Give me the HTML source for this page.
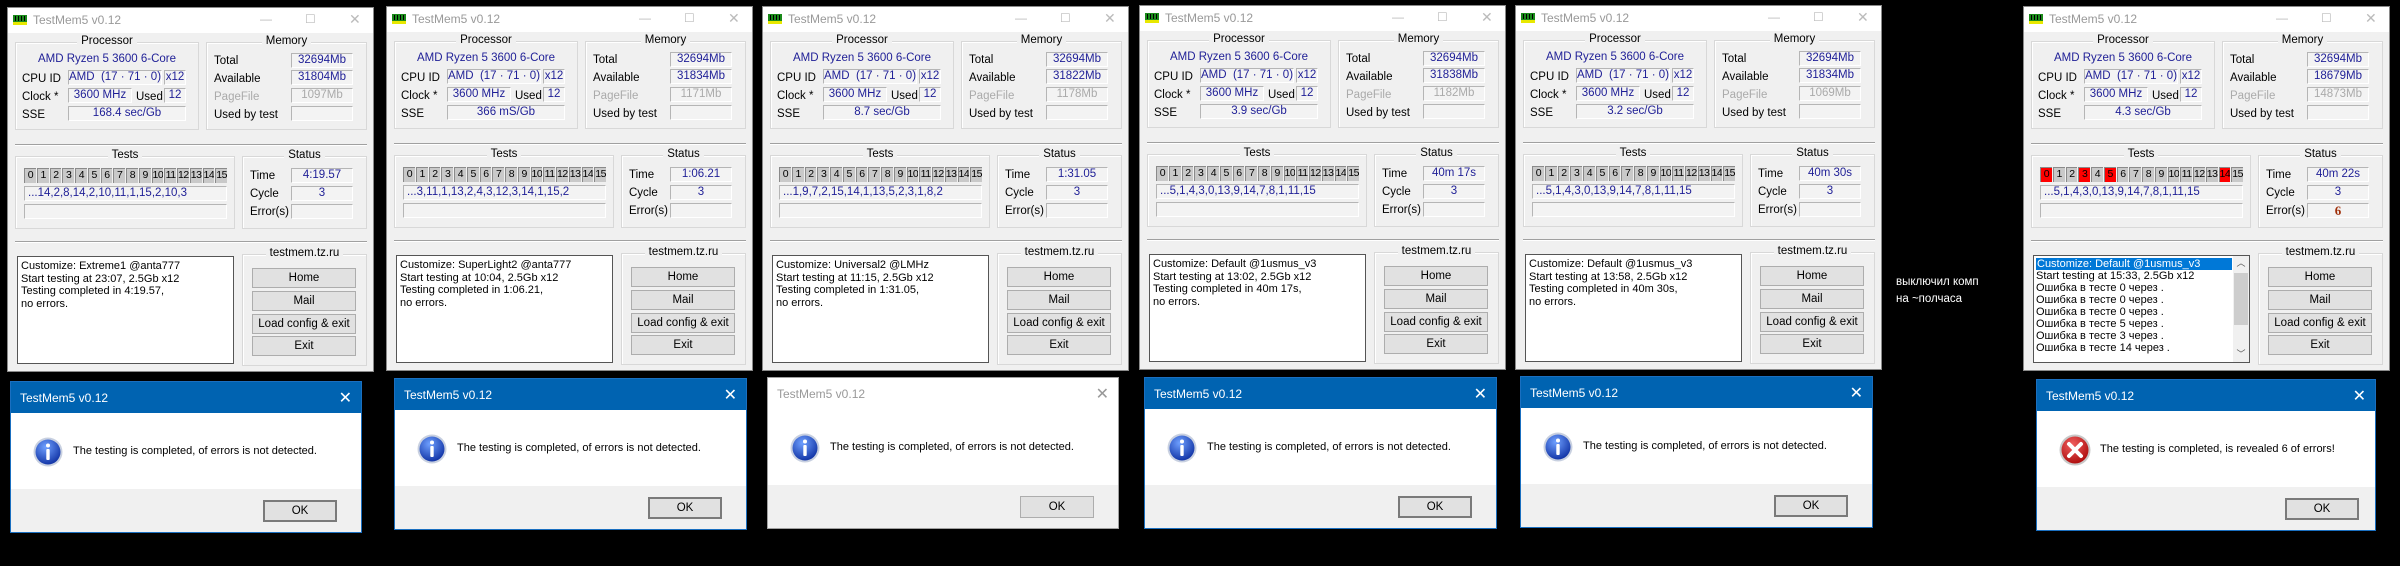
<!DOCTYPE html>
<html><head><meta charset="utf-8"><style>
*{box-sizing:border-box;margin:0;padding:0}
body{width:2400px;height:566px;background:#000;position:relative;overflow:hidden;font-family:"Liberation Sans","DejaVu Sans",sans-serif;font-size:11px;color:#000}
.w{position:absolute;width:367px;height:365px;background:#f0f0f0;border:1px solid #8a8a8a}
.tb{position:absolute;left:0;top:0;width:100%;height:25px;background:#fff}
.tt{position:absolute;left:25px;top:5px;font-size:12px;color:#999}
.ic{position:absolute;left:5px;top:7px}
.tbn{position:absolute;top:4px;color:#bbb;font-size:12px}
.g{position:absolute;border:1px solid #d8d8d8;box-shadow:inset 1px 1px 0 #fff}
.gl{position:absolute;top:-8px;left:0;right:0;text-align:center}
.gl span{background:#f0f0f0;padding:0 4px;font-size:11.5px}
.l{position:absolute;font-size:11.5px;line-height:14px}
.f{position:absolute;height:15px;background:#f3f3f3;border:1px solid;border-color:#b5b5b5 #fff #fff #b5b5b5;color:#1e1e96;text-align:center;line-height:13px;font-size:11.5px;white-space:nowrap;overflow:hidden}
.sep{position:absolute;left:7px;width:352px;height:2px;border-top:1px solid #a0a0a0;border-bottom:1px solid #fff}
.bx{position:absolute;left:16px;top:160px;width:203px;height:15px;display:flex;gap:1px}
.bx i{flex:1;font-style:normal;background:#c9c9c9;border-left:1px solid #8a8a8a;border-top:1px solid #8a8a8a;font-size:10.5px;line-height:13px;text-align:center;letter-spacing:-0.5px;overflow:hidden}
.bx i.r{background:#f00}
.log{position:absolute;left:9px;top:248px;width:217px;height:108px;background:#fff;border:1px solid #555;padding:3px 3px;font-size:11px;line-height:12.5px;white-space:nowrap;overflow:hidden}
.b{position:absolute;left:244px;width:104px;height:20px;background:#e1e1e1;border:1px solid #adadad;text-align:center;line-height:18px;font-size:11.5px}
.d{position:absolute;height:152px;background:#fff;border:1px solid #1a6fc0}
.dt{position:absolute;left:0;top:0;right:0;height:31px;background:#0063b1;color:#fff;font-size:12px;padding:9px 0 0 9px}
.dx{position:absolute;right:9px;top:6px;font-size:16px;color:#fff}
.dm{position:absolute;left:62px;top:63px;font-size:11px;white-space:nowrap;color:#000}
.dicon{position:absolute;left:22px;top:55px}
.df{position:absolute;left:0;right:0;bottom:0;height:43px;background:#f0f0f0}
.ok{position:absolute;right:24px;top:11px;width:74px;height:22px;border:2px solid #7a7a7a;background:#e1e1e1;text-align:center;line-height:18px;font-size:11.5px}
.in{border-color:#a0a0a0}
.in .dt{background:#fff;color:#999}
.in .dx{color:#999}
.in .ok{border-color:#adadad;border-width:1px;line-height:20px}
</style></head><body>

<svg width="0" height="0" style="position:absolute"><defs>
<g id="mi"><rect x="0" y="0" width="14" height="9" fill="#1a8a1a"/><rect x="2" y="1" width="1" height="5" fill="#000"/><rect x="5" y="1" width="1" height="5" fill="#000"/><rect x="8" y="1" width="1" height="5" fill="#000"/><rect x="11" y="1" width="1" height="5" fill="#000"/><rect x="0" y="7" width="14" height="3" fill="#e8e800"/></g>
<radialGradient id="bg1" cx="40%" cy="30%" r="70%"><stop offset="0" stop-color="#6fa0ff"/><stop offset="1" stop-color="#1437a8"/></radialGradient>
<g id="info"><circle cx="15" cy="15" r="14.5" fill="#c8d0e0"/><circle cx="15" cy="15" r="12.5" fill="url(#bg1)"/><circle cx="15" cy="8.5" r="2" fill="#fff"/><rect x="13.3" y="12" width="3.4" height="11" rx="1" fill="#fff"/></g>
<radialGradient id="rg1" cx="40%" cy="30%" r="70%"><stop offset="0" stop-color="#f06060"/><stop offset="1" stop-color="#b01010"/></radialGradient>
<g id="err"><circle cx="16" cy="16" r="15.5" fill="#c8c8c8"/><circle cx="16" cy="16" r="13.5" fill="url(#rg1)"/><path d="M10 10 L22 22 M22 10 L10 22" stroke="#fff" stroke-width="4" stroke-linecap="round"/></g>
</defs></svg>

<div class="w" style="left:7px;top:7px">
<div class="tb"><svg class="ic" width="14" height="10"><use href="#mi"/></svg><div class="tt">TestMem5 v0.12</div><div class="tbn" style="left:252px">—</div><div class="tbn" style="left:297px">☐</div><div class="tbn" style="left:341px;font-size:14px;top:3px">✕</div></div>
<div class="g" style="left:7px;top:34px;width:184px;height:88px"><div class="gl"><span>Processor</span></div></div>
<div class="l" style="left:7px;width:184px;text-align:center;top:44px;color:#1e1e96">AMD Ryzen 5 3600 6-Core</div>
<div class="l" style="left:14px;top:64px">CPU ID</div><div class="f" style="left:60px;top:62px;width:94px">AMD &nbsp;(17 · 71 · 0)</div><div class="f" style="left:156px;top:62px;width:22px">x12</div>
<div class="l" style="left:14px;top:82px">Clock *</div><div class="f" style="left:60px;top:80px;width:64px">3600 MHz</div><div class="l" style="left:128px;top:82px">Used</div><div class="f" style="left:156px;top:80px;width:22px">12</div>
<div class="l" style="left:14px;top:100px">SSE</div><div class="f" style="left:60px;top:98px;width:118px">168.4 sec/Gb</div>
<div class="g" style="left:198px;top:34px;width:161px;height:88px"><div class="gl"><span>Memory</span></div></div>
<div class="l" style="left:206px;top:46px">Total</div><div class="f" style="left:283px;top:45px;width:62px">32694Mb</div>
<div class="l" style="left:206px;top:64px">Available</div><div class="f" style="left:283px;top:62px;width:62px">31804Mb</div>
<div class="l" style="left:206px;top:82px;color:#aaa">PageFile</div><div class="f" style="left:283px;top:80px;width:62px;color:#aaa">1097Mb</div>
<div class="l" style="left:206px;top:100px">Used by test</div><div class="f" style="left:283px;top:98px;width:62px"></div>
<div class="sep" style="top:136px"></div>
<div class="g" style="left:7px;top:148px;width:220px;height:73px"><div class="gl"><span>Tests</span></div></div>
<div class="bx"><i>0</i><i>1</i><i>2</i><i>3</i><i>4</i><i>5</i><i>6</i><i>7</i><i>8</i><i>9</i><i>10</i><i>11</i><i>12</i><i>13</i><i>14</i><i>15</i></div>
<div class="f" style="left:16px;top:178px;width:203px;text-align:left;padding-left:3px">...14,2,8,14,2,10,11,1,15,2,10,3</div>
<div class="f" style="left:16px;top:196px;width:203px"></div>
<div class="g" style="left:234px;top:148px;width:125px;height:73px"><div class="gl"><span>Status</span></div></div>
<div class="l" style="left:242px;top:161px">Time</div><div class="f" style="left:283px;top:160px;width:62px">4:19.57</div>
<div class="l" style="left:242px;top:179px">Cycle</div><div class="f" style="left:283px;top:178px;width:62px">3</div>
<div class="l" style="left:242px;top:197px">Error(s)</div><div class="f" style="left:283px;top:196px;width:62px"></div>
<div class="sep" style="top:233px"></div>
<div class="log">Customize: Extreme1 @anta777<br>Start testing at 23:07, 2.5Gb x12<br>Testing completed in 4:19.57,<br>no errors.</div>
<div class="g" style="left:234px;top:246px;width:125px;height:112px"><div class="gl"><span>testmem.tz.ru</span></div></div>
<div class="b" style="top:260px">Home</div><div class="b" style="top:283px">Mail</div><div class="b" style="top:306px">Load config &amp; exit</div><div class="b" style="top:328px">Exit</div>
</div>

<div class="w" style="left:386px;top:6px">
<div class="tb"><svg class="ic" width="14" height="10"><use href="#mi"/></svg><div class="tt">TestMem5 v0.12</div><div class="tbn" style="left:252px">—</div><div class="tbn" style="left:297px">☐</div><div class="tbn" style="left:341px;font-size:14px;top:3px">✕</div></div>
<div class="g" style="left:7px;top:34px;width:184px;height:88px"><div class="gl"><span>Processor</span></div></div>
<div class="l" style="left:7px;width:184px;text-align:center;top:44px;color:#1e1e96">AMD Ryzen 5 3600 6-Core</div>
<div class="l" style="left:14px;top:64px">CPU ID</div><div class="f" style="left:60px;top:62px;width:94px">AMD &nbsp;(17 · 71 · 0)</div><div class="f" style="left:156px;top:62px;width:22px">x12</div>
<div class="l" style="left:14px;top:82px">Clock *</div><div class="f" style="left:60px;top:80px;width:64px">3600 MHz</div><div class="l" style="left:128px;top:82px">Used</div><div class="f" style="left:156px;top:80px;width:22px">12</div>
<div class="l" style="left:14px;top:100px">SSE</div><div class="f" style="left:60px;top:98px;width:118px">366 mS/Gb</div>
<div class="g" style="left:198px;top:34px;width:161px;height:88px"><div class="gl"><span>Memory</span></div></div>
<div class="l" style="left:206px;top:46px">Total</div><div class="f" style="left:283px;top:45px;width:62px">32694Mb</div>
<div class="l" style="left:206px;top:64px">Available</div><div class="f" style="left:283px;top:62px;width:62px">31834Mb</div>
<div class="l" style="left:206px;top:82px;color:#aaa">PageFile</div><div class="f" style="left:283px;top:80px;width:62px;color:#aaa">1171Mb</div>
<div class="l" style="left:206px;top:100px">Used by test</div><div class="f" style="left:283px;top:98px;width:62px"></div>
<div class="sep" style="top:136px"></div>
<div class="g" style="left:7px;top:148px;width:220px;height:73px"><div class="gl"><span>Tests</span></div></div>
<div class="bx"><i>0</i><i>1</i><i>2</i><i>3</i><i>4</i><i>5</i><i>6</i><i>7</i><i>8</i><i>9</i><i>10</i><i>11</i><i>12</i><i>13</i><i>14</i><i>15</i></div>
<div class="f" style="left:16px;top:178px;width:203px;text-align:left;padding-left:3px">...3,11,1,13,2,4,3,12,3,14,1,15,2</div>
<div class="f" style="left:16px;top:196px;width:203px"></div>
<div class="g" style="left:234px;top:148px;width:125px;height:73px"><div class="gl"><span>Status</span></div></div>
<div class="l" style="left:242px;top:161px">Time</div><div class="f" style="left:283px;top:160px;width:62px">1:06.21</div>
<div class="l" style="left:242px;top:179px">Cycle</div><div class="f" style="left:283px;top:178px;width:62px">3</div>
<div class="l" style="left:242px;top:197px">Error(s)</div><div class="f" style="left:283px;top:196px;width:62px"></div>
<div class="sep" style="top:233px"></div>
<div class="log">Customize: SuperLight2 @anta777<br>Start testing at 10:04, 2.5Gb x12<br>Testing completed in 1:06.21,<br>no errors.</div>
<div class="g" style="left:234px;top:246px;width:125px;height:112px"><div class="gl"><span>testmem.tz.ru</span></div></div>
<div class="b" style="top:260px">Home</div><div class="b" style="top:283px">Mail</div><div class="b" style="top:306px">Load config &amp; exit</div><div class="b" style="top:328px">Exit</div>
</div>

<div class="w" style="left:762px;top:6px">
<div class="tb"><svg class="ic" width="14" height="10"><use href="#mi"/></svg><div class="tt">TestMem5 v0.12</div><div class="tbn" style="left:252px">—</div><div class="tbn" style="left:297px">☐</div><div class="tbn" style="left:341px;font-size:14px;top:3px">✕</div></div>
<div class="g" style="left:7px;top:34px;width:184px;height:88px"><div class="gl"><span>Processor</span></div></div>
<div class="l" style="left:7px;width:184px;text-align:center;top:44px;color:#1e1e96">AMD Ryzen 5 3600 6-Core</div>
<div class="l" style="left:14px;top:64px">CPU ID</div><div class="f" style="left:60px;top:62px;width:94px">AMD &nbsp;(17 · 71 · 0)</div><div class="f" style="left:156px;top:62px;width:22px">x12</div>
<div class="l" style="left:14px;top:82px">Clock *</div><div class="f" style="left:60px;top:80px;width:64px">3600 MHz</div><div class="l" style="left:128px;top:82px">Used</div><div class="f" style="left:156px;top:80px;width:22px">12</div>
<div class="l" style="left:14px;top:100px">SSE</div><div class="f" style="left:60px;top:98px;width:118px">8.7 sec/Gb</div>
<div class="g" style="left:198px;top:34px;width:161px;height:88px"><div class="gl"><span>Memory</span></div></div>
<div class="l" style="left:206px;top:46px">Total</div><div class="f" style="left:283px;top:45px;width:62px">32694Mb</div>
<div class="l" style="left:206px;top:64px">Available</div><div class="f" style="left:283px;top:62px;width:62px">31822Mb</div>
<div class="l" style="left:206px;top:82px;color:#aaa">PageFile</div><div class="f" style="left:283px;top:80px;width:62px;color:#aaa">1178Mb</div>
<div class="l" style="left:206px;top:100px">Used by test</div><div class="f" style="left:283px;top:98px;width:62px"></div>
<div class="sep" style="top:136px"></div>
<div class="g" style="left:7px;top:148px;width:220px;height:73px"><div class="gl"><span>Tests</span></div></div>
<div class="bx"><i>0</i><i>1</i><i>2</i><i>3</i><i>4</i><i>5</i><i>6</i><i>7</i><i>8</i><i>9</i><i>10</i><i>11</i><i>12</i><i>13</i><i>14</i><i>15</i></div>
<div class="f" style="left:16px;top:178px;width:203px;text-align:left;padding-left:3px">...1,9,7,2,15,14,1,13,5,2,3,1,8,2</div>
<div class="f" style="left:16px;top:196px;width:203px"></div>
<div class="g" style="left:234px;top:148px;width:125px;height:73px"><div class="gl"><span>Status</span></div></div>
<div class="l" style="left:242px;top:161px">Time</div><div class="f" style="left:283px;top:160px;width:62px">1:31.05</div>
<div class="l" style="left:242px;top:179px">Cycle</div><div class="f" style="left:283px;top:178px;width:62px">3</div>
<div class="l" style="left:242px;top:197px">Error(s)</div><div class="f" style="left:283px;top:196px;width:62px"></div>
<div class="sep" style="top:233px"></div>
<div class="log">Customize: Universal2 @LMHz<br>Start testing at 11:15, 2.5Gb x12<br>Testing completed in 1:31.05,<br>no errors.</div>
<div class="g" style="left:234px;top:246px;width:125px;height:112px"><div class="gl"><span>testmem.tz.ru</span></div></div>
<div class="b" style="top:260px">Home</div><div class="b" style="top:283px">Mail</div><div class="b" style="top:306px">Load config &amp; exit</div><div class="b" style="top:328px">Exit</div>
</div>

<div class="w" style="left:1139px;top:5px">
<div class="tb"><svg class="ic" width="14" height="10"><use href="#mi"/></svg><div class="tt">TestMem5 v0.12</div><div class="tbn" style="left:252px">—</div><div class="tbn" style="left:297px">☐</div><div class="tbn" style="left:341px;font-size:14px;top:3px">✕</div></div>
<div class="g" style="left:7px;top:34px;width:184px;height:88px"><div class="gl"><span>Processor</span></div></div>
<div class="l" style="left:7px;width:184px;text-align:center;top:44px;color:#1e1e96">AMD Ryzen 5 3600 6-Core</div>
<div class="l" style="left:14px;top:64px">CPU ID</div><div class="f" style="left:60px;top:62px;width:94px">AMD &nbsp;(17 · 71 · 0)</div><div class="f" style="left:156px;top:62px;width:22px">x12</div>
<div class="l" style="left:14px;top:82px">Clock *</div><div class="f" style="left:60px;top:80px;width:64px">3600 MHz</div><div class="l" style="left:128px;top:82px">Used</div><div class="f" style="left:156px;top:80px;width:22px">12</div>
<div class="l" style="left:14px;top:100px">SSE</div><div class="f" style="left:60px;top:98px;width:118px">3.9 sec/Gb</div>
<div class="g" style="left:198px;top:34px;width:161px;height:88px"><div class="gl"><span>Memory</span></div></div>
<div class="l" style="left:206px;top:46px">Total</div><div class="f" style="left:283px;top:45px;width:62px">32694Mb</div>
<div class="l" style="left:206px;top:64px">Available</div><div class="f" style="left:283px;top:62px;width:62px">31838Mb</div>
<div class="l" style="left:206px;top:82px;color:#aaa">PageFile</div><div class="f" style="left:283px;top:80px;width:62px;color:#aaa">1182Mb</div>
<div class="l" style="left:206px;top:100px">Used by test</div><div class="f" style="left:283px;top:98px;width:62px"></div>
<div class="sep" style="top:136px"></div>
<div class="g" style="left:7px;top:148px;width:220px;height:73px"><div class="gl"><span>Tests</span></div></div>
<div class="bx"><i>0</i><i>1</i><i>2</i><i>3</i><i>4</i><i>5</i><i>6</i><i>7</i><i>8</i><i>9</i><i>10</i><i>11</i><i>12</i><i>13</i><i>14</i><i>15</i></div>
<div class="f" style="left:16px;top:178px;width:203px;text-align:left;padding-left:3px">...5,1,4,3,0,13,9,14,7,8,1,11,15</div>
<div class="f" style="left:16px;top:196px;width:203px"></div>
<div class="g" style="left:234px;top:148px;width:125px;height:73px"><div class="gl"><span>Status</span></div></div>
<div class="l" style="left:242px;top:161px">Time</div><div class="f" style="left:283px;top:160px;width:62px">40m 17s</div>
<div class="l" style="left:242px;top:179px">Cycle</div><div class="f" style="left:283px;top:178px;width:62px">3</div>
<div class="l" style="left:242px;top:197px">Error(s)</div><div class="f" style="left:283px;top:196px;width:62px"></div>
<div class="sep" style="top:233px"></div>
<div class="log">Customize: Default @1usmus_v3<br>Start testing at 13:02, 2.5Gb x12<br>Testing completed in 40m 17s,<br>no errors.</div>
<div class="g" style="left:234px;top:246px;width:125px;height:112px"><div class="gl"><span>testmem.tz.ru</span></div></div>
<div class="b" style="top:260px">Home</div><div class="b" style="top:283px">Mail</div><div class="b" style="top:306px">Load config &amp; exit</div><div class="b" style="top:328px">Exit</div>
</div>

<div class="w" style="left:1515px;top:5px">
<div class="tb"><svg class="ic" width="14" height="10"><use href="#mi"/></svg><div class="tt">TestMem5 v0.12</div><div class="tbn" style="left:252px">—</div><div class="tbn" style="left:297px">☐</div><div class="tbn" style="left:341px;font-size:14px;top:3px">✕</div></div>
<div class="g" style="left:7px;top:34px;width:184px;height:88px"><div class="gl"><span>Processor</span></div></div>
<div class="l" style="left:7px;width:184px;text-align:center;top:44px;color:#1e1e96">AMD Ryzen 5 3600 6-Core</div>
<div class="l" style="left:14px;top:64px">CPU ID</div><div class="f" style="left:60px;top:62px;width:94px">AMD &nbsp;(17 · 71 · 0)</div><div class="f" style="left:156px;top:62px;width:22px">x12</div>
<div class="l" style="left:14px;top:82px">Clock *</div><div class="f" style="left:60px;top:80px;width:64px">3600 MHz</div><div class="l" style="left:128px;top:82px">Used</div><div class="f" style="left:156px;top:80px;width:22px">12</div>
<div class="l" style="left:14px;top:100px">SSE</div><div class="f" style="left:60px;top:98px;width:118px">3.2 sec/Gb</div>
<div class="g" style="left:198px;top:34px;width:161px;height:88px"><div class="gl"><span>Memory</span></div></div>
<div class="l" style="left:206px;top:46px">Total</div><div class="f" style="left:283px;top:45px;width:62px">32694Mb</div>
<div class="l" style="left:206px;top:64px">Available</div><div class="f" style="left:283px;top:62px;width:62px">31834Mb</div>
<div class="l" style="left:206px;top:82px;color:#aaa">PageFile</div><div class="f" style="left:283px;top:80px;width:62px;color:#aaa">1069Mb</div>
<div class="l" style="left:206px;top:100px">Used by test</div><div class="f" style="left:283px;top:98px;width:62px"></div>
<div class="sep" style="top:136px"></div>
<div class="g" style="left:7px;top:148px;width:220px;height:73px"><div class="gl"><span>Tests</span></div></div>
<div class="bx"><i>0</i><i>1</i><i>2</i><i>3</i><i>4</i><i>5</i><i>6</i><i>7</i><i>8</i><i>9</i><i>10</i><i>11</i><i>12</i><i>13</i><i>14</i><i>15</i></div>
<div class="f" style="left:16px;top:178px;width:203px;text-align:left;padding-left:3px">...5,1,4,3,0,13,9,14,7,8,1,11,15</div>
<div class="f" style="left:16px;top:196px;width:203px"></div>
<div class="g" style="left:234px;top:148px;width:125px;height:73px"><div class="gl"><span>Status</span></div></div>
<div class="l" style="left:242px;top:161px">Time</div><div class="f" style="left:283px;top:160px;width:62px">40m 30s</div>
<div class="l" style="left:242px;top:179px">Cycle</div><div class="f" style="left:283px;top:178px;width:62px">3</div>
<div class="l" style="left:242px;top:197px">Error(s)</div><div class="f" style="left:283px;top:196px;width:62px"></div>
<div class="sep" style="top:233px"></div>
<div class="log">Customize: Default @1usmus_v3<br>Start testing at 13:58, 2.5Gb x12<br>Testing completed in 40m 30s,<br>no errors.</div>
<div class="g" style="left:234px;top:246px;width:125px;height:112px"><div class="gl"><span>testmem.tz.ru</span></div></div>
<div class="b" style="top:260px">Home</div><div class="b" style="top:283px">Mail</div><div class="b" style="top:306px">Load config &amp; exit</div><div class="b" style="top:328px">Exit</div>
</div>

<div class="w" style="left:2023px;top:6px">
<div class="tb"><svg class="ic" width="14" height="10"><use href="#mi"/></svg><div class="tt">TestMem5 v0.12</div><div class="tbn" style="left:252px">—</div><div class="tbn" style="left:297px">☐</div><div class="tbn" style="left:341px;font-size:14px;top:3px">✕</div></div>
<div class="g" style="left:7px;top:34px;width:184px;height:88px"><div class="gl"><span>Processor</span></div></div>
<div class="l" style="left:7px;width:184px;text-align:center;top:44px;color:#1e1e96">AMD Ryzen 5 3600 6-Core</div>
<div class="l" style="left:14px;top:64px">CPU ID</div><div class="f" style="left:60px;top:62px;width:94px">AMD &nbsp;(17 · 71 · 0)</div><div class="f" style="left:156px;top:62px;width:22px">x12</div>
<div class="l" style="left:14px;top:82px">Clock *</div><div class="f" style="left:60px;top:80px;width:64px">3600 MHz</div><div class="l" style="left:128px;top:82px">Used</div><div class="f" style="left:156px;top:80px;width:22px">12</div>
<div class="l" style="left:14px;top:100px">SSE</div><div class="f" style="left:60px;top:98px;width:118px">4.3 sec/Gb</div>
<div class="g" style="left:198px;top:34px;width:161px;height:88px"><div class="gl"><span>Memory</span></div></div>
<div class="l" style="left:206px;top:46px">Total</div><div class="f" style="left:283px;top:45px;width:62px">32694Mb</div>
<div class="l" style="left:206px;top:64px">Available</div><div class="f" style="left:283px;top:62px;width:62px">18679Mb</div>
<div class="l" style="left:206px;top:82px;color:#aaa">PageFile</div><div class="f" style="left:283px;top:80px;width:62px;color:#aaa">14873Mb</div>
<div class="l" style="left:206px;top:100px">Used by test</div><div class="f" style="left:283px;top:98px;width:62px"></div>
<div class="sep" style="top:136px"></div>
<div class="g" style="left:7px;top:148px;width:220px;height:73px"><div class="gl"><span>Tests</span></div></div>
<div class="bx"><i class="r">0</i><i>1</i><i>2</i><i class="r">3</i><i>4</i><i class="r">5</i><i>6</i><i>7</i><i>8</i><i>9</i><i>10</i><i>11</i><i>12</i><i>13</i><i class="r">14</i><i>15</i></div>
<div class="f" style="left:16px;top:178px;width:203px;text-align:left;padding-left:3px">...5,1,4,3,0,13,9,14,7,8,1,11,15</div>
<div class="f" style="left:16px;top:196px;width:203px"></div>
<div class="g" style="left:234px;top:148px;width:125px;height:73px"><div class="gl"><span>Status</span></div></div>
<div class="l" style="left:242px;top:161px">Time</div><div class="f" style="left:283px;top:160px;width:62px">40m 22s</div>
<div class="l" style="left:242px;top:179px">Cycle</div><div class="f" style="left:283px;top:178px;width:62px">3</div>
<div class="l" style="left:242px;top:197px">Error(s)</div><div class="f" style="left:283px;top:196px;width:62px;color:#a0300a;font-weight:bold;font-family:'Liberation Serif',serif;font-size:13px">6</div>
<div class="sep" style="top:233px"></div>
<div class="log" style="padding:2px 2px;line-height:12px"><div style="background:#0078d7;color:#fff;width:196px;padding-left:1px">Customize: Default @1usmus_v3</div>Start testing at 15:33, 2.5Gb x12<br>Ошибка в тесте 0 через .<br>Ошибка в тесте 0 через .<br>Ошибка в тесте 0 через .<br>Ошибка в тесте 5 через .<br>Ошибка в тесте 3 через .<br>Ошибка в тесте 14 через .
<div style="position:absolute;right:0;top:0;width:16px;height:106px;background:#f0f0f0"><div style="position:absolute;top:1px;width:16px;text-align:center;font-size:9px;color:#555">︿</div><div style="position:absolute;left:1px;top:17px;width:14px;height:52px;background:#cdcdcd"></div><div style="position:absolute;bottom:2px;width:16px;text-align:center;font-size:9px;color:#555">﹀</div></div></div>
<div class="g" style="left:234px;top:246px;width:125px;height:112px"><div class="gl"><span>testmem.tz.ru</span></div></div>
<div class="b" style="top:260px">Home</div><div class="b" style="top:283px">Mail</div><div class="b" style="top:306px">Load config &amp; exit</div><div class="b" style="top:328px">Exit</div>
</div>

<div style="position:absolute;left:1896px;top:274px;color:#fff;font-size:11.5px;line-height:17px">выключил комп<br>на ~полчаса</div>

<div class="d" style="left:10px;top:381px;width:352px"><div class="dt">TestMem5 v0.12<span class="dx">✕</span></div><svg class="dicon" width="30" height="30"><use href="#info"/></svg><div class="dm">The testing is completed, of errors is not detected.</div><div class="df"><div class="ok">OK</div></div></div>
<div class="d" style="left:394px;top:378px;width:353px"><div class="dt">TestMem5 v0.12<span class="dx">✕</span></div><svg class="dicon" width="30" height="30"><use href="#info"/></svg><div class="dm">The testing is completed, of errors is not detected.</div><div class="df"><div class="ok">OK</div></div></div>
<div class="d in" style="left:767px;top:377px;width:352px"><div class="dt">TestMem5 v0.12<span class="dx">✕</span></div><svg class="dicon" width="30" height="30"><use href="#info"/></svg><div class="dm">The testing is completed, of errors is not detected.</div><div class="df"><div class="ok">OK</div></div></div>
<div class="d" style="left:1144px;top:377px;width:353px"><div class="dt">TestMem5 v0.12<span class="dx">✕</span></div><svg class="dicon" width="30" height="30"><use href="#info"/></svg><div class="dm">The testing is completed, of errors is not detected.</div><div class="df"><div class="ok">OK</div></div></div>
<div class="d" style="left:1520px;top:376px;width:353px"><div class="dt">TestMem5 v0.12<span class="dx">✕</span></div><svg class="dicon" width="30" height="30"><use href="#info"/></svg><div class="dm">The testing is completed, of errors is not detected.</div><div class="df"><div class="ok">OK</div></div></div>
<div class="d" style="left:2036px;top:379px;width:340px"><div class="dt">TestMem5 v0.12<span class="dx">✕</span></div><svg class="dicon" width="32" height="32" style="left:22px;top:54px"><use href="#err"/></svg><div class="dm" style="left:63px">The testing is completed, is revealed 6 of errors!</div><div class="df"><div class="ok" style="right:16px">OK</div></div></div>

</body></html>
